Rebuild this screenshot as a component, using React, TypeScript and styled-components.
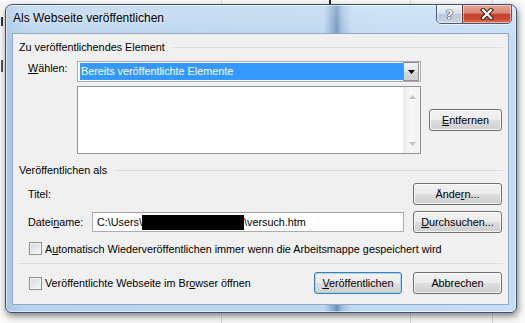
import React from "react";
import styled, { createGlobalStyle } from "styled-components";

const GlobalStyle = createGlobalStyle`
  html, body {
    margin: 0;
    padding: 0;
  }
  body {
    width: 525px;
    height: 323px;
    overflow: hidden;
    font-family: "Liberation Sans", Arial, sans-serif;
    color: #000;
  }
`;

const Desktop = styled.div`
  box-sizing: border-box;
  width: 525px;
  height: 323px;
  padding: 4px 8px 10px 5px;
  background:
    linear-gradient(90deg, transparent 329px, #222 329px, #222 331px, transparent 331px) 0 0 / 100% 4px no-repeat,
    linear-gradient(#333, #333) 1px 17px / 2px 9px no-repeat,
    linear-gradient(#555, #555) 1px 60px / 2px 12px no-repeat,
    linear-gradient(90deg, transparent 221px, #dadada 221px, #dadada 222px, transparent 222px,
      transparent 410px, #dadada 410px, #dadada 411px, transparent 411px,
      transparent 492px, #dadada 492px, #dadada 493px, transparent 493px),
    #fafafa;
`;

const Window = styled.div`
  box-sizing: border-box;
  width: 512px;
  height: 309px;
  display: flex;
  flex-direction: column;
  padding: 0 7px 7px 6px;
  border: 1px solid #3f526b;
  border-radius: 7px 7px 6px 6px;
  background:
    linear-gradient(rgba(255, 255, 255, 0.25), rgba(255, 255, 255, 0) 40px),
    linear-gradient(90deg, #a8c5e5 0, #b9d3ee 20px, #bcd6f0 318px, #93b3d6 325px,
      #6f8fb6 331px, #9fbfe2 336px, #c1daf3 346px, #c5ddf5 100%);
  box-shadow: inset 0 0 0 1px rgba(255, 255, 255, 0.55), 1px 3px 7px rgba(0, 0, 0, 0.5);
`;

const TitleBar = styled.div`
  height: 28px;
  display: flex;
  align-items: flex-start;
`;

const TitleText = styled.div`
  flex: 1;
  padding: 6px 0 0 1px;
  font-size: 12px;
  line-height: 15px;
  color: #000;
  text-shadow: 0 0 6px rgba(255, 255, 255, 0.9);
`;

const CaptionButtons = styled.div`
  display: flex;
  height: 18px;
  margin-right: -3px;
  border: 1px solid #4c5c70;
  border-top: none;
  border-radius: 0 0 5px 5px;
  overflow: hidden;
  box-shadow: 0 1px 0 rgba(255, 255, 255, 0.6);
`;

const CaptionButton = styled.div<{ $close?: boolean }>`
  width: ${(p) => (p.$close ? "48px" : "25px")};
  display: flex;
  align-items: center;
  justify-content: center;
  box-shadow: inset 0 0 0 1px rgba(255, 255, 255, 0.45);
  background: ${(p) =>
    p.$close
      ? "linear-gradient(#e6a596 0%, #d98674 45%, #c5412c 52%, #cc4b33 80%, #e07b5e 100%)"
      : "linear-gradient(#eef3f9 0%, #d8e3ef 45%, #bccbdc 52%, #c7d5e4 100%)"};
  border-left: ${(p) => (p.$close ? "1px solid #5a3c3c" : "none")};
`;

const HelpGlyph = styled.span`
  font-family: "DejaVu Sans", sans-serif;
  font-weight: bold;
  font-size: 13px;
  line-height: 13px;
  color: #f4f6f9;
  text-shadow: 0 0 1px #2b3440, 0 0 1px #2b3440, 0 0 1px #2b3440;
`;

const Client = styled.div`
  flex: 1;
  display: flex;
  flex-direction: column;
  background: #f0f0f0;
  border: 1px solid #93a9c3;
  padding: 5px 5px 0 6px;
  font-size: 10.8px;
`;

const SectionHeader = styled.div<{ $top?: number }>`
  display: flex;
  align-items: center;
  gap: 8px;
  height: 16px;
  margin-top: ${(p) => p.$top ?? 0}px;
  &::after {
    content: "";
    flex: 1;
    height: 1px;
    margin-top: 1px;
    background: #d7dde4;
  }
`;

const Row = styled.div<{ $top: number; $align?: string; $height?: number }>`
  display: flex;
  align-items: ${(p) => p.$align ?? "center"};
  margin-top: ${(p) => p.$top}px;
  height: ${(p) => (p.$height ? `${p.$height}px` : "auto")};
  padding-left: 9px;
`;

const Label = styled.div<{ $width?: number }>`
  width: ${(p) => (p.$width ? `${p.$width}px` : "auto")};
  line-height: 14px;
  flex-shrink: 0;
`;

const Key = styled.span`
  text-decoration: underline;
  text-underline-offset: 1px;
`;

const Combo = styled.div`
  box-sizing: border-box;
  width: 344px;
  height: 21px;
  display: flex;
  border: 1px solid #a9abb1;
  background: #fff;
`;

const ComboValue = styled.div`
  flex: 1;
  margin: 1px 0 1px 2px;
  padding-left: 1px;
  background: #3399ff;
  color: #fff;
  line-height: 17px;
`;

const ComboArrow = styled.div`
  box-sizing: border-box;
  width: 16px;
  margin-right: 1px;
  display: flex;
  align-items: center;
  justify-content: center;
  border: 1px solid #8c8f94;
  background: linear-gradient(#f3f3f3, #e4e4e4 50%, #d6d6d6 51%, #cfcfcf);
`;

const ListBox = styled.div`
  box-sizing: border-box;
  width: 344px;
  height: 68px;
  display: flex;
  justify-content: flex-end;
  border: 1px solid #8e9299;
  background: #fff;
`;

const ScrollTrack = styled.div`
  width: 17px;
  display: flex;
  flex-direction: column;
  justify-content: space-between;
  align-items: center;
  padding: 8px 0 7px;
  box-sizing: border-box;
  background: linear-gradient(90deg, #ebebeb, #f7f7f7 40%, #f2f2f2);
  border-left: 1px solid #ececec;
`;

const Button = styled.div<{ $width: number; $default?: boolean }>`
  box-sizing: border-box;
  width: ${(p) => p.$width}px;
  height: 22px;
  flex-shrink: 0;
  display: flex;
  align-items: center;
  justify-content: center;
  border: 1px solid ${(p) => (p.$default ? "#3c7fb1" : "#707070")};
  border-radius: 3px;
  background: linear-gradient(#f2f2f2 0%, #ebebeb 50%, #dddddd 51%, #cfcfcf 100%);
  box-shadow: inset 0 0 0 1px ${(p) => (p.$default ? "#9fd7f6" : "rgba(255, 255, 255, 0.75)")};
`;

const TextInput = styled.div`
  box-sizing: border-box;
  width: 312px;
  height: 20px;
  display: flex;
  align-items: center;
  padding-left: 4px;
  border: 1px solid #abadb3;
  border-top-color: #9ea1a8;
  background: #fff;
  white-space: pre;
`;

const Redacted = styled.span`
  display: inline-block;
  width: 102px;
  height: 15px;
  background: #000;
`;

const Check = styled.div`
  box-sizing: border-box;
  width: 13px;
  height: 13px;
  flex-shrink: 0;
  margin-right: 3px;
  border: 1px solid #8e8f8f;
  background: linear-gradient(135deg, #d4d7db, #f7f7f7);
  box-shadow: inset 0 0 0 1px #f4f4f4;
`;

const Separator = styled.div`
  height: 1px;
  margin-top: 8px;
  background: #d9dde2;
`;

const Right = styled.div<{ $gap?: number }>`
  margin-left: auto;
  margin-right: 1px;
  display: flex;
  gap: ${(p) => p.$gap ?? 0}px;
`;

const Gap = styled.div<{ $w: number }>`
  width: ${(p) => p.$w}px;
  flex-shrink: 0;
`;

export default function App() {
  return (
    <>
      <GlobalStyle />
      <Desktop>
        <Window>
          <TitleBar>
            <TitleText>Als Webseite veröffentlichen</TitleText>
            <CaptionButtons>
              <CaptionButton>
                <HelpGlyph>?</HelpGlyph>
              </CaptionButton>
              <CaptionButton $close>
                <svg width="14" height="12" viewBox="0 0 14 12">
                  <path d="M3 2 L11 10 M11 2 L3 10" stroke="#3a1d1a" strokeWidth="4.2" strokeLinecap="square" />
                  <path d="M3 2 L11 10 M11 2 L3 10" stroke="#ffffff" strokeWidth="2.2" strokeLinecap="square" />
                </svg>
              </CaptionButton>
            </CaptionButtons>
          </TitleBar>
          <Client>
            <SectionHeader>Zu veröffentlichendes Element</SectionHeader>
            <Row $top={6} $align="flex-start" $height={21}>
              <Label $width={49}>
                <Key>W</Key>ählen:
              </Label>
              <Combo>
                <ComboValue>Bereits veröffentlichte Elemente</ComboValue>
                <ComboArrow>
                  <svg width="7" height="4" viewBox="0 0 7 4">
                    <path d="M0 0 H7 L3.5 4 Z" fill="#000" />
                  </svg>
                </ComboArrow>
              </Combo>
            </Row>
            <Row $top={4} $height={68}>
              <Gap $w={49} />
              <ListBox>
                <ScrollTrack>
                  <svg width="7" height="4" viewBox="0 0 7 4">
                    <path d="M0 4 H7 L3.5 0 Z" fill="#bfc2c6" />
                  </svg>
                  <svg width="7" height="4" viewBox="0 0 7 4">
                    <path d="M0 0 H7 L3.5 4 Z" fill="#bfc2c6" />
                  </svg>
                </ScrollTrack>
              </ListBox>
              <Right>
                <Button $width={73}>
                  <span>
                    <Key>E</Key>ntfernen
                  </span>
                </Button>
              </Right>
            </Row>

            <SectionHeader $top={8}>Veröffentlichen als</SectionHeader>
            <Row $top={5} $height={22}>
              <Label>Titel:</Label>
              <Right>
                <Button $width={89}>
                  <span>
                    Ände<Key>r</Key>n...
                  </span>
                </Button>
              </Right>
            </Row>
            <Row $top={6} $height={22}>
              <Label $width={64}>
                Datei<Key>n</Key>ame:
              </Label>
              <TextInput>
                C:\Users\<Redacted />\versuch.htm
              </TextInput>
              <Right>
                <Button $width={89}>
                  <span>
                    <Key>D</Key>urchsuchen...
                  </span>
                </Button>
              </Right>
            </Row>
            <Row $top={9} $height={13}>
              <Gap $w={1} />
              <Check />
              <Label>
                A<Key>u</Key>tomatisch Wiederveröffentlichen immer wenn die Arbeitsmappe gespeichert wird
              </Label>
            </Row>

            <Separator />
            <Row $top={8} $height={22}>
              <Gap $w={1} />
              <Check />
              <Label>
                Veröffentlichte Webseite im Br<Key>o</Key>wser öffnen
              </Label>
              <Right $gap={11}>
                <Button $width={88} $default>
                  <span>
                    <Key>V</Key>eröffentlichen
                  </span>
                </Button>
                <Button $width={89}>Abbrechen</Button>
              </Right>
            </Row>
          </Client>
        </Window>
      </Desktop>
    </>
  );
}
